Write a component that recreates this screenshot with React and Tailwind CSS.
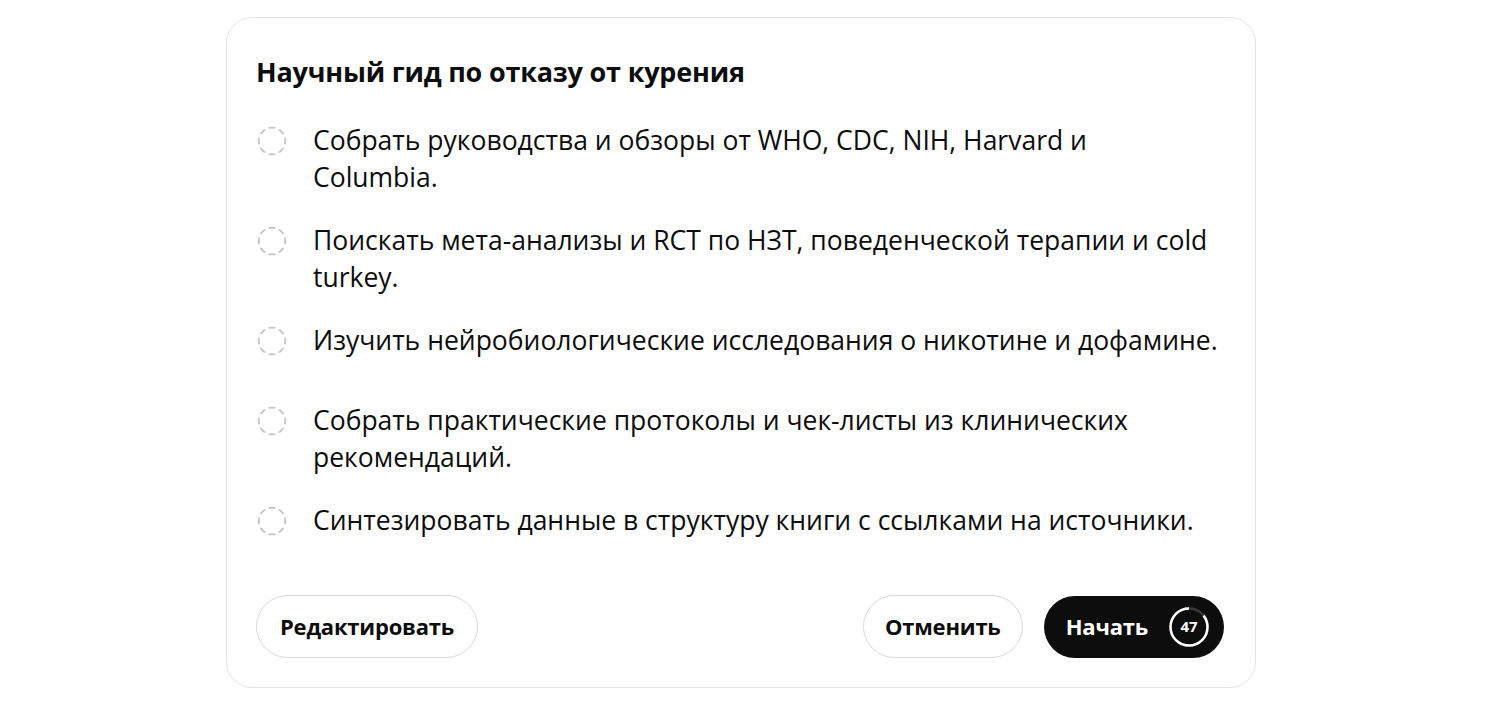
import React from "react";
import { CircleDashed } from "lucide-react";

const steps = [
  ["Собрать руководства и обзоры от WHO, CDC, NIH, Harvard и", "Columbia."],
  ["Поискать мета-анализы и RCT по НЗТ, поведенческой терапии и cold turkey."],
  ["Изучить нейробиологические исследования о никотине и дофамине."],
  ["Собрать практические протоколы и чек-листы из клинических рекомендаций."],
  ["Синтезировать данные в структуру книги с ссылками на источники."],
];

function Countdown({ value, progress }) {
  const r = 18.5;
  const c = 2 * Math.PI * r;
  return (
    <div className="relative flex h-[42px] w-[42px] items-center justify-center">
      <svg width="42" height="42" viewBox="0 0 42 42" className="absolute inset-0 -rotate-90">
        <circle cx="21" cy="21" r={r} fill="none" stroke="#3a3a3a" strokeWidth="2.5" />
        <circle
          cx="21"
          cy="21"
          r={r}
          fill="none"
          stroke="#ffffff"
          strokeWidth="2.5"
          strokeDasharray={c}
          strokeDashoffset={c * (1 - progress)}
          transform="scale(1,-1) translate(0,-42)"
        />
      </svg>
      <span className="relative text-[15px] font-bold text-white">{value}</span>
    </div>
  );
}

export default function App() {
  return (
    <div
      className="flex min-h-screen justify-center bg-white pr-[18px] pt-[17px] text-[#0d0d0d]"
      style={{ fontFamily: "'Open Sans', 'Noto Sans', sans-serif" }}
    >
      <div className="flex h-[671px] w-[1030px] shrink-0 flex-col rounded-[26px] border border-[#e3e3e3] px-[29px] pb-[29px] pt-[36px]">
        <h2 className="text-[27px] font-bold leading-9 tracking-[-0.2px]">
          Научный гид по отказу от курения
        </h2>

        {/* Plan steps */}
        <ul className="mt-[32px] flex flex-col gap-[26px]">
          {steps.map((lines) => (
            <li key={lines[0]} className="flex min-h-[54px] items-start gap-[25px]">
              <div className="flex h-[37px] w-[32px] shrink-0 items-center justify-center">
                <CircleDashed size={32} strokeWidth={1.4} className="text-[#c4c4c4]" />
              </div>
              <p className="max-w-[912px] text-[26.5px] leading-[37px]">
                {lines.map((l, i) => (
                  <React.Fragment key={i}>
                    {i > 0 && <br />}
                    {l}
                  </React.Fragment>
                ))}
              </p>
            </li>
          ))}
        </ul>

        {/* Actions */}
        <div className="mt-auto flex items-center justify-between">
          <button
            type="button"
            className="h-[63px] rounded-full border border-[#d9d9d9] px-[23px] text-[22px] font-bold tracking-[-0.2px]"
          >
            Редактировать
          </button>
          <div className="flex items-center gap-[21px] pr-[2px]">
            <button
              type="button"
              className="h-[63px] rounded-full border border-[#d9d9d9] px-[21px] text-[22px] font-bold tracking-[-0.2px]"
            >
              Отменить
            </button>
            <button
              type="button"
              className="flex h-[62px] items-center gap-[20px] rounded-full bg-[#0d0d0d] pl-[22px] pr-[14px] text-[22px] font-bold tracking-[-0.2px] text-white"
            >
              Начать
              <Countdown value={47} progress={0.85} />
            </button>
          </div>
        </div>
      </div>
    </div>
  );
}
